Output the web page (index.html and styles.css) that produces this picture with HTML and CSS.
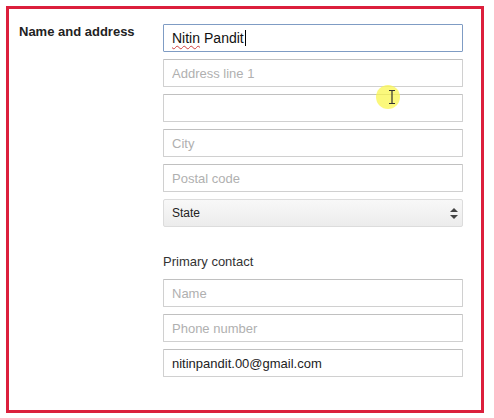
FILE: index.html
```html
<!DOCTYPE html>
<html lang="en">
<head>
    <meta charset="UTF-8">
    <title>Name and address</title>
    <link rel="stylesheet" href="styles.css">
</head>
<body>
<div class="panel">
    <div class="section-label">Name and address</div>
    <div class="fields">
        <div class="field focused"><span class="misspelled">Nitin</span> Pandit<span class="caret"></span></div>
        <input class="field" type="text" placeholder="Address line 1">
        <div class="field-wrap">
            <input class="field" type="text">
            <span class="pointer">
                <svg class="beam" width="8" height="14" viewBox="0 0 8 14">
                    <path d="M1 0.5 H7 M1 13.5 H7 M4 0.5 V13.5" stroke="#333" stroke-width="1.2" fill="none"/>
                </svg>
            </span>
        </div>
        <input class="field" type="text" placeholder="City">
        <input class="field" type="text" placeholder="Postal code">
        <div class="select-wrap">
            <select class="select">
                <option>State</option>
            </select>
            <svg class="select-arrows" width="8" height="11" viewBox="0 0 8 11">
                <path d="M0 4 L4 0 L8 4 Z" fill="#444"/>
                <path d="M0 7 L4 11 L8 7 Z" fill="#444"/>
            </svg>
        </div>

        <div class="sub-label">Primary contact</div>
        <input class="field" type="text" placeholder="Name">
        <input class="field" type="text" placeholder="Phone number">
        <input class="field" type="text" value="nitinpandit.00@gmail.com">
    </div>
</div>
</body>
</html>
```

FILE: styles.css
```css
body {
    margin: 0;
    background-color: #fff;
    font-family: Arial, "Liberation Sans", sans-serif;
}

.panel {
    display: flex;
    margin: 6px;
    width: 472px;
    height: 401px;
    border: 3px solid #dc1f3c;
    box-sizing: content-box;
    padding: 0;
}

.section-label {
    width: 144px;
    margin: 15px 0 0 10px;
    font-size: 13px;
    font-weight: bold;
    line-height: 15px;
    color: #222;
}

.fields {
    display: flex;
    flex-direction: column;
    gap: 7px;
    width: 300px;
    padding-top: 15px;
}

.field {
    display: block;
    width: 300px;
    height: 28px;
    box-sizing: border-box;
    margin: 0;
    padding: 0 8px;
    border: 1px solid #d0d0d0;
    border-top-color: #c0c0c0;
    border-radius: 1px;
    font-family: Arial, "Liberation Sans", sans-serif;
    font-size: 13px;
    color: #222;
    background-color: #fff;
    outline: none;
}

.field::placeholder {
    color: #b0b0b0;
}

.focused {
    display: flex;
    align-items: center;
    border: 1px solid #7f9cc4;
    color: #111;
    font-size: 14px;
}

.misspelled {
    text-decoration: underline wavy #d04040;
    text-decoration-thickness: 1px;
    text-underline-offset: 2px;
    margin-right: 4px;
}

.caret {
    display: inline-block;
    width: 1px;
    height: 16px;
    margin-left: 1px;
    background-color: #000;
}

.field-wrap {
    position: relative;
}

.pointer {
    position: absolute;
    left: 213px;
    top: -9px;
    width: 24px;
    height: 24px;
    border-radius: 50%;
    background-color: rgba(250, 245, 80, 0.75);
}

.beam {
    position: absolute;
    left: 12px;
    top: 5px;
}

.select-wrap {
    position: relative;
}

.select {
    display: block;
    width: 300px;
    height: 28px;
    margin: 0;
    padding: 0 8px;
    border: 1px solid #dcdcdc;
    border-radius: 2px;
    background: linear-gradient(#f8f8f8, #ececec);
    font-family: Arial, "Liberation Sans", sans-serif;
    font-size: 12px;
    color: #222;
    -webkit-appearance: none;
    appearance: none;
}

.select-arrows {
    position: absolute;
    right: 5px;
    top: 9px;
}

.sub-label {
    margin-top: 20px;
    margin-bottom: 3px;
    font-size: 13px;
    line-height: 15px;
    color: #333;
}
```
